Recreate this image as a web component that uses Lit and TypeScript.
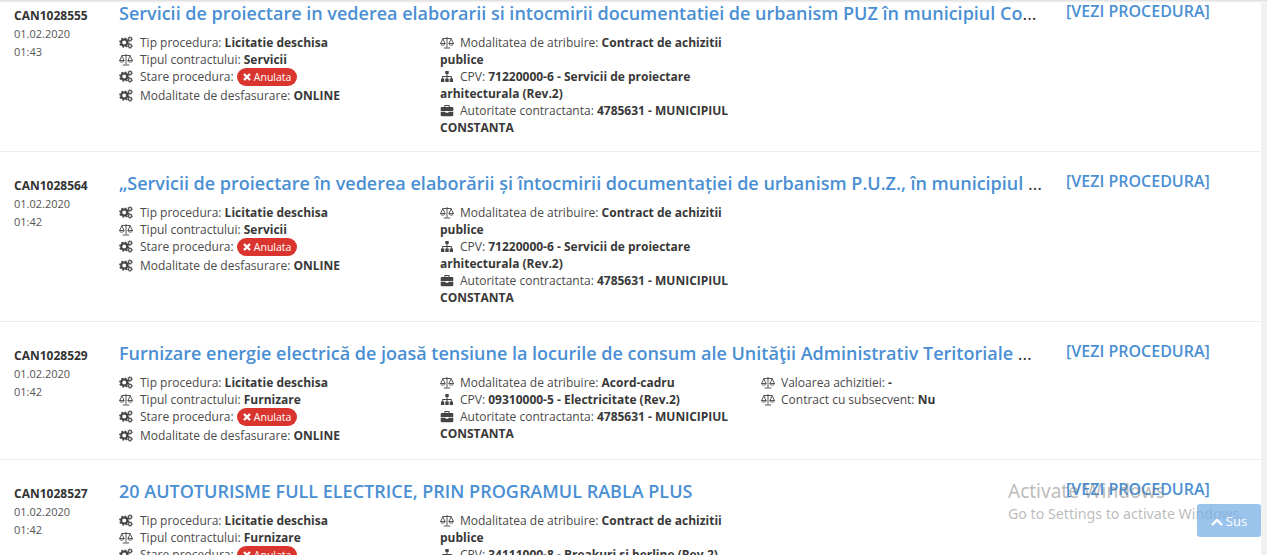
import { LitElement, html, css, svg } from "lit";
import { customElement } from "lit/decorators.js";

const icons: Record<string, any> = {
  cogs: svg`<circle cx="5.2" cy="6.6" r="3" fill="none" stroke="currentColor" stroke-width="2"/><circle cx="5.200" cy="6.600" r="4.300" fill="none" stroke="currentColor" stroke-width="1.600" stroke-dasharray="1.700 1.680"/><circle cx="11" cy="3" r="1.500" fill="none" stroke="currentColor" stroke-width="1.100"/><circle cx="11" cy="3" r="2.300" fill="none" stroke="currentColor" stroke-width=".9" stroke-dasharray="1 .8"/><circle cx="11" cy="10" r="1.500" fill="none" stroke="currentColor" stroke-width="1.100"/><circle cx="11" cy="10" r="2.300" fill="none" stroke="currentColor" stroke-width=".9" stroke-dasharray="1 .8"/>`,
  scale: svg`<g fill="none" stroke="currentColor" stroke-width=".9"><path d="M7 1v10.500M3.800 12h6.400M2.500 2.500h9M2.800 2.800.7 7.400M2.800 2.800l2.200 4.600M11.200 2.800 9 7.400M11.200 2.800l2.200 4.600M.4 7.500c.4 2.200 4.400 2.200 4.800 0zM8.800 7.500c.4 2.200 4.400 2.200 4.800 0z"/></g>`,
  sitemap: svg`<path fill="currentColor" d="M5.300 1h3.400v3H7.500v2h4.300v2.600h1.200V12H9.700V8.600h1.200V7H7.500v1.600h1.200V12H5.300V8.600h1.200V7H3.100v1.600h1.200V12H1V8.600h1.200V6h4.300V4H5.300z"/>`,
  briefcase: svg`<path fill="currentColor" fill-rule="evenodd" d="M4.300 3V1.800c0-.5.3-.8.8-.8h3.800c.5 0 .8.3.8.8V3h2.500c.7 0 1.100.4 1.100 1.100V7H.700V4.100C.700 3.400 1.100 3 1.800 3zM5.300 3h3.400V2H5.300zM.700 7.800h4.900v1h2.800v-1h4.900v3.300c0 .7-.4 1.100-1.100 1.100H1.800c-.7 0-1.100-.4-1.100-1.100z"/>`,
};

type Attr = { icon?: string; label: string; value?: string; badge?: boolean };
type Row = { id: string; time: string; title: string; columns: Attr[][] };

const status = (contract: string): Attr[] => [
  { icon: "cogs", label: "Tip procedura:", value: "Licitatie deschisa" },
  { icon: "scale", label: "Tipul contractului:", value: contract },
  { icon: "cogs", label: "Stare procedura:", badge: true },
  { icon: "cogs", label: "Modalitate de desfasurare:", value: "ONLINE" },
];
const award: Attr = { icon: "scale", label: "Modalitatea de atribuire:", value: "Contract de achizitii publice" };
const authority: Attr = { icon: "briefcase", label: "Autoritate contractanta:", value: "4785631 - MUNICIPIUL CONSTANTA" };
const cpvArch: Attr = { icon: "sitemap", label: "CPV:", value: "71220000-6 - Servicii de proiectare arhitecturala (Rev.2)" };

const rows: Row[] = [
  {
    id: "CAN1028555", time: "01:43",
    title: "Servicii de proiectare in vederea elaborarii si intocmirii documentatiei de urbanism PUZ în municipiul Constanta zona de nord",
    columns: [status("Servicii"), [award, cpvArch, authority]],
  },
  {
    id: "CAN1028564", time: "01:42",
    title: "„Servicii de proiectare în vederea elaborării și întocmirii documentației de urbanism P.U.Z., în municipiul Constanta zona",
    columns: [status("Servicii"), [award, cpvArch, authority]],
  },
  {
    id: "CAN1028529", time: "01:42",
    title: "Furnizare energie electrică de joasă tensiune la locurile de consum ale Unităţii Administrativ Teritoriale Municipiul Constanta",
    columns: [
      status("Furnizare"),
      [
        { icon: "scale", label: "Modalitatea de atribuire:", value: "Acord-cadru" },
        { icon: "sitemap", label: "CPV:", value: "09310000-5 - Electricitate (Rev.2)" },
        authority,
      ],
      [
        { icon: "scale", label: "Valoarea achizitiei:", value: "-" },
        { icon: "scale", label: "Contract cu subsecvent:", value: "Nu" },
      ],
    ],
  },
  {
    id: "CAN1028527", time: "01:42",
    title: "20 AUTOTURISME FULL ELECTRICE, PRIN PROGRAMUL RABLA PLUS",
    columns: [
      status("Furnizare"),
      [award, { icon: "sitemap", label: "CPV:", value: "34111000-8 - Breakuri si berline (Rev.2)" }, authority],
    ],
  },
];

@customElement("app-root")
export class AppRoot extends LitElement {
  static styles = css`
    :host {
      display: block;
      position: relative;
      height: 555px;
      overflow: hidden;
      background: #f1f1f1;
      color: #4a4a4a;
      font-family: "Open Sans", sans-serif;
      font-size: 12px;
      line-height: 17px;
    }
    .list { margin: -18px 6px 0 0; background: #fff; }
    .row {
      display: grid;
      grid-template-columns: 119px 927px 1fr;
      height: 170px;
      box-sizing: border-box;
      border-bottom: 1px solid #eee;
    }
    .row.short { height: 138px; }
    .meta { padding: 25px 0 0 14px; }
    .id { font-weight: 700; color: #333; }
    .date { font-size: 11px; line-height: 17.500px; margin-top: 1px; color: #555; }
    .main { padding-top: 18px; min-width: 0; }
    .title {
      font-size: 18px;
      line-height: 26px;
      color: #333;
      white-space: nowrap;
      overflow: hidden;
      text-overflow: ellipsis;
    }
    .title span { font-weight: 600; color: #4a8fd3; }
    .cols { display: flex; margin-top: 8px; }
    .col { width: 301px; margin-right: 20px; flex: none; }
    .attr { min-height: 17px; }
    .attr b { font-weight: 700; color: #383838; }
    .icon {
      display: inline-block;
      width: 14px;
      height: 13px;
      margin-right: 6px;
      vertical-align: -2px;
      color: #444;
    }
    .col:first-child .icon { margin-right: 7px; }
    .badge {
      display: inline-flex;
      align-items: center;
      gap: 3px;
      background: #d9352e;
      color: #fff;
      border-radius: 9px;
      font-size: 10.500px;
      line-height: 18px;
      height: 18px;
      padding: 0 6px;
      vertical-align: top;
    }
    .badge svg { width: 8px; height: 8px; }
    .badge-row { height: 18px; margin-bottom: 1px; }
    .action {
      padding: 16px 0 0 20px;
      font-size: 16px;
      line-height: 26px;
      font-weight: 600;
      color: #4a8fd3;
      white-space: nowrap;
    }
    .watermark {
      position: absolute;
      left: 1008px;
      top: 479px;
      color: rgba(120, 120, 120, 0.5);
      font-family: "Noto Sans", sans-serif;
      white-space: nowrap;
      pointer-events: none;
    }
    .wm1 { font-size: 19px; line-height: 25px; }
    .wm2 { font-size: 14.200px; line-height: 20px; }
    .top-btn {
      position: absolute;
      left: 1197px;
      top: 504px;
      width: 64px;
      height: 33px;
      box-sizing: border-box;
      background: rgba(122, 176, 229, 0.75);
      border-radius: 3px;
      color: #fff;
      font-size: 13px;
      line-height: 35px;
      text-align: center;
    }
    .top-btn svg { width: 12px; height: 8px; margin-right: 3px; }
    .shade {
      position: absolute;
      left: 0;
      right: 0;
      top: 0;
      height: 3px;
      background: linear-gradient(#dedede, #f4f4f4 70%, #fff);
    }
  `;

  private attr(a: Attr) {
    return html`<div class="attr ${a.badge ? "badge-row" : ""}">
      <svg class="icon" viewBox="0 0 14 13">${icons[a.icon!]}</svg>${a.label}
      ${a.badge
        ? html`<span class="badge"><svg viewBox="0 0 8 8"><path d="M1 1l6 6M7 1 1 7" stroke="#fff" stroke-width="2.400"/></svg>Anulata</span>`
        : html`<b>${a.value}</b>`}
    </div>`;
  }

  render() {
    return html`
      <div class="list">
        ${rows.map(
          (r) => html`<div class="row ${r.columns.length === 3 ? "short" : ""}">
            <div class="meta">
              <div class="id">${r.id}</div>
              <div class="date">01.02.2020<br />${r.time}</div>
            </div>
            <div class="main">
              <div class="title"><span>${r.title}</span></div>
              <div class="cols">
                ${r.columns.map((c) => html`<div class="col">${c.map((a) => this.attr(a))}</div>`)}
              </div>
            </div>
            <div class="action">[VEZI PROCEDURA]</div>
          </div>`
        )}
      </div>
      <div class="shade"></div>
      <div class="watermark">
        <div class="wm1">Activate Windows</div>
        <div class="wm2">Go to Settings to activate Windows.</div>
      </div>
      <div class="top-btn">
        <svg viewBox="0 0 12 8"><path d="M1 7 6 2l5 5" fill="none" stroke="#fff" stroke-width="2.400"/></svg>Sus
      </div>
    `;
  }
}
